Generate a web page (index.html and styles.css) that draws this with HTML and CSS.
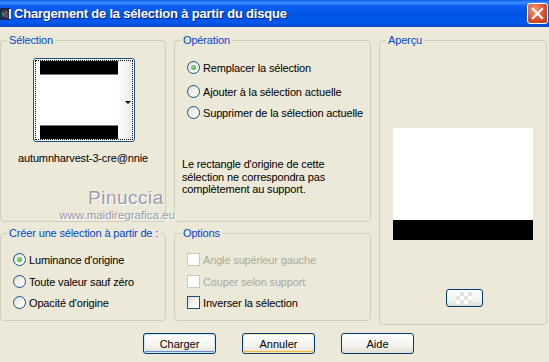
FILE: index.html
```html
<!DOCTYPE html>
<html lang="fr">
<head>
    <meta charset="UTF-8">
    <title>Chargement de la sélection à partir du disque</title>
    <link rel="stylesheet" href="styles.css">
</head>
<body>
    <div class="titlebar">
        <svg class="app-icon" width="12" height="14" viewBox="0 0 12 14">
            <rect x="0" y="1" width="11" height="12" rx="1" fill="#1a2a4a"/>
            <circle cx="5" cy="7" r="4" fill="#3a3a5a"/>
            <path d="M2 5 L5 7 L3 10 Z" fill="#2fb04a"/>
            <path d="M5 3 L8 6 L5 7 Z" fill="#d23a3a"/>
            <path d="M5 7 L8 9 L6 11 Z" fill="#8a4ad0"/>
            <rect x="9" y="2" width="2" height="10" fill="#dfe8f8"/>
        </svg>
        <span class="title">Chargement de la sélection à partir du disque</span>
        <button class="close" aria-label="Fermer">
            <svg width="13" height="13" viewBox="0 0 13 13">
                <path d="M2 2 L11 11 M11 2 L2 11" stroke="#fff" stroke-width="2.2" stroke-linecap="square"/>
            </svg>
        </button>
    </div>

    <div class="dialog">
        <div class="groups">
            <fieldset class="group g-selection">
                <legend>Sélection</legend>
                <div class="thumb">
                    <div class="thumb-inner">
                        <div class="thumb-pic">
                            <div class="bar bar-top"></div>
                            <div class="bar-gap"></div>
                            <div class="bar bar-bottom"></div>
                        </div>
                        <div class="thumb-side"><span class="arrow"></span></div>
                    </div>
                </div>
                <div class="filename">autumnharvest-3-cre@nnie</div>
            </fieldset>

            <fieldset class="group g-operation">
                <legend>Opération</legend>
                <div class="options-list op-list">
                    <label class="opt"><span class="radio on"></span>Remplacer la sélection</label>
                    <label class="opt op-2"><span class="radio"></span>Ajouter à la sélection actuelle</label>
                    <label class="opt op-3"><span class="radio"></span>Supprimer de la sélection actuelle</label>
                </div>
                <p class="note">Le rectangle d'origine de cette sélection ne correspondra pas complètement au support.</p>
            </fieldset>

            <fieldset class="group g-apercu">
                <legend>Aperçu</legend>
                <div class="preview">
                    <div class="preview-white"></div>
                    <div class="preview-black"></div>
                </div>
                <button class="bg-btn"><span class="checker"></span></button>
            </fieldset>

            <fieldset class="group g-create">
                <legend>Créer une sélection à partir de :</legend>
                <div class="options-list low-list">
                    <label class="opt"><span class="radio on"></span>Luminance d'origine</label>
                    <label class="opt row-2"><span class="radio"></span>Toute valeur sauf zéro</label>
                    <label class="opt row-3"><span class="radio"></span>Opacité d'origine</label>
                </div>
            </fieldset>

            <fieldset class="group g-options">
                <legend>Options</legend>
                <div class="options-list low-list">
                    <label class="opt disabled"><span class="check"></span>Angle supérieur gauche</label>
                    <label class="opt disabled row-2"><span class="check"></span>Couper selon support</label>
                    <label class="opt row-3"><span class="check"></span>Inverser la sélection</label>
                </div>
            </fieldset>
        </div>

        <div class="buttons">
            <button class="btn btn-default">Charger</button>
            <button class="btn btn-focus">Annuler</button>
            <button class="btn">Aide</button>
        </div>

        <div class="watermark">
            <div class="wm-name">Pinuccia</div>
            <div class="wm-url">www.maidiregrafica.eu</div>
        </div>
    </div>
</body>
</html>
```

FILE: styles.css
```css
body {
    margin: 0;
    width: 549px;
    height: 362px;
    overflow: hidden;
    background: #ece9d8;
    font-family: "Liberation Sans", Arial, sans-serif;
    font-size: 11px;
    letter-spacing: -0.15px;
    color: #000;
}
.titlebar {
    height: 27px;
    display: flex;
    align-items: center;
    background: linear-gradient(#0a5ae8 0%, #3d8dfb 10%, #0b5ff0 22%, #0055e5 55%, #0059ec 85%, #0046c6 100%);
}
.app-icon {
    margin: 0 2px 0 0;
}
.title {
    flex: 1;
    color: #fff;
    font-weight: bold;
    font-size: 13px;
    letter-spacing: -0.2px;
    text-shadow: 1px 1px 0 #0a1c80;
}
.close {
    width: 21px;
    height: 21px;
    margin-right: 1px;
    padding: 0;
    border: 1px solid #fff;
    border-radius: 3px;
    background: radial-gradient(circle at 35% 30%, #f09a78, #d8522c 55%, #b83a14);
    display: flex;
    align-items: center;
    justify-content: center;
}
.dialog {
    position: relative;
    padding-top: 7px;
}
.groups {
    display: grid;
    grid-template-columns: 166px 197px 168px;
    grid-template-rows: 188px 94px;
    column-gap: 8px;
    row-gap: 5px;
}
.group {
    margin: 0;
    padding: 0;
    min-width: 0;
    border: 1px solid #d0d0bf;
    border-radius: 4px;
}
.group legend {
    margin-left: 6px;
    padding: 0 2px;
    color: #0046d5;
    line-height: 13px;
    white-space: nowrap;
}
.g-apercu {
    grid-row: 1 / 3;
    grid-column: 3;
    display: flex;
    flex-direction: column;
    align-items: center;
    height: 289px;
}

/* thumbnail */
.thumb {
    margin: 11px 0 0 32px;
    width: 102px;
    height: 84px;
    box-sizing: border-box;
    border: 1px solid #1c5180;
    border-radius: 3px;
    padding: 1px;
    background: #fff;
}
.thumb-inner {
    height: 100%;
    box-sizing: border-box;
    border: 1px dotted #000;
    display: flex;
    background: #fff;
}
.thumb-pic {
    width: 79px;
    margin-left: 4px;
    display: flex;
    flex-direction: column;
}
.bar {
    background: #000;
}
.bar-top {
    height: 13px;
    border-bottom: 1px solid #7a7a7a;
}
.bar-gap {
    flex: 1;
}
.bar-bottom {
    height: 13px;
    border-top: 1px solid #7a7a7a;
}
.thumb-side {
    width: 13px;
    background: linear-gradient(90deg, #fff, #ecebe4);
    display: flex;
    align-items: center;
    justify-content: flex-end;
    padding-right: 1px;
}
.arrow {
    width: 0;
    height: 0;
    border-left: 3px solid transparent;
    border-right: 3px solid transparent;
    border-top: 3px solid #000;
    margin-top: 4px;
}
.filename {
    margin-top: 10px;
    text-align: center;
    line-height: 13px;
}

/* radio / check lists */
.options-list {
    display: flex;
    flex-direction: column;
    padding-left: 12px;
}
.op-list {
    margin-top: 14px;
}
.op-2 {
    margin-top: 11px;
}
.op-3 {
    margin-top: 8px;
}
.low-list {
    margin-top: 13px;
}
.row-2 {
    margin-top: 9px;
}
.row-3 {
    margin-top: 8px;
}
.opt {
    display: flex;
    align-items: center;
    height: 13px;
    white-space: nowrap;
}
.opt.disabled {
    color: #aca899;
}
.radio {
    width: 13px;
    height: 13px;
    box-sizing: border-box;
    margin-right: 3px;
    border: 1px solid #1c5180;
    border-radius: 50%;
    background: linear-gradient(135deg, #dcdcd5, #fff 80%);
    display: flex;
    align-items: center;
    justify-content: center;
}
.radio.on::after {
    content: "";
    width: 5px;
    height: 5px;
    border-radius: 50%;
    background: radial-gradient(circle at 40% 40%, #8ee28e, #21a121);
}
.check {
    width: 13px;
    height: 13px;
    box-sizing: border-box;
    margin-right: 3px;
    border: 1px solid #1c5180;
    background: linear-gradient(135deg, #dcdcd5, #fff 80%);
}
.disabled .check {
    border-color: #cac8bb;
    background: #fff;
}
.note {
    margin: 39px 0 0 7px;
    line-height: 12.5px;
    width: 180px;
}

/* preview */
.preview {
    margin-top: 81px;
    width: 140px;
    height: 112px;
    display: flex;
    flex-direction: column;
}
.preview-white {
    flex: 1;
    background: #fff;
}
.preview-black {
    height: 20px;
    background: #000;
}
.bg-btn {
    margin: 49px 0 0 2px;
    width: 37px;
    height: 18px;
    padding: 0;
    border: 1px solid #003c74;
    border-radius: 3px;
    background: linear-gradient(#fff, #f2f1ea 70%, #dedcd0);
    display: flex;
    align-items: center;
    justify-content: center;
}
.checker {
    width: 16px;
    height: 12px;
    background-color: #fff;
    background-image: conic-gradient(#e2e2e2 25%, #fff 0 50%, #e2e2e2 0 75%, #fff 0);
    background-size: 8px 8px;
}

/* bottom buttons */
.buttons {
    display: flex;
    gap: 26px;
    padding-left: 143px;
    margin-top: 12px;
}
.btn {
    width: 73px;
    height: 21px;
    padding: 0;
    border: 1px solid #003c74;
    border-radius: 3px;
    background: linear-gradient(#fff, #f4f3ee 60%, #e3e0d2);
    font-family: "Liberation Sans", Arial, sans-serif;
    font-size: 11px;
    color: #000;
}
.btn-default {
    box-shadow: inset 0 0 0 1px #cee7ff, inset 0 -1px 0 1px #698cc9;
}
.btn-focus {
    box-shadow: inset 0 0 0 1px #ffe8a8, inset 0 -1px 0 1px #f6b43c;
}

/* watermark over the dialog */
.watermark {
    position: absolute;
    left: 56px;
    top: 161px;
    width: 122px;
    text-align: center;
    pointer-events: none;
}
.wm-name {
    font-size: 19px;
    line-height: 20px;
    color: #9c9cb0;
    text-shadow: 1px 1px 0 #fff;
    letter-spacing: 0.5px;
    padding-left: 18px;
}
.wm-url {
    margin-top: 1px;
    font-size: 11.5px;
    line-height: 12px;
    letter-spacing: 0;
    color: #9898aa;
    text-shadow: 1px 1px 0 #fff;
}
```
